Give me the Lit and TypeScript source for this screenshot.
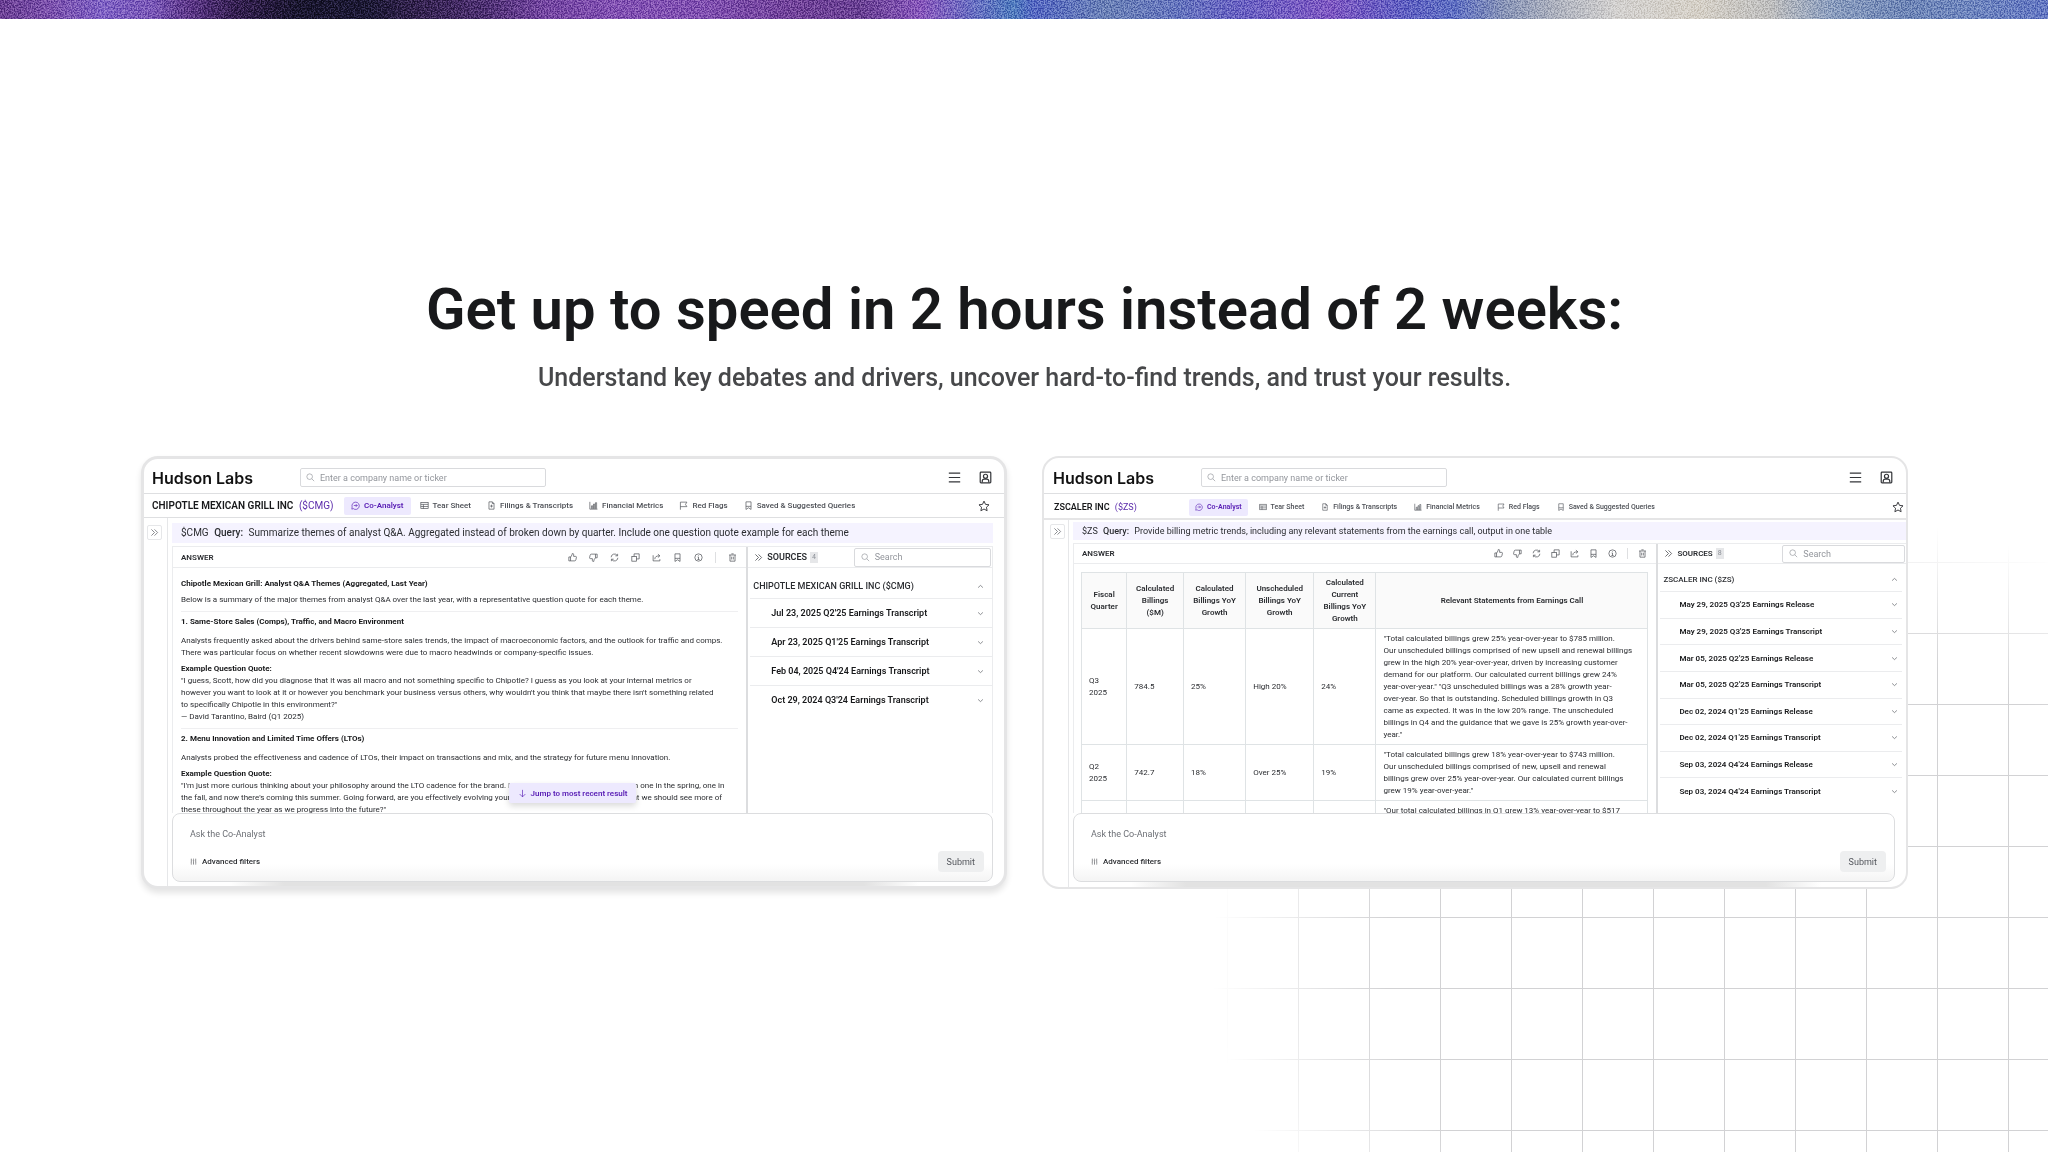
import { LitElement, html, css, svg, nothing } from "lit";
import { customElement, property } from "lit/decorators.js";
import { classMap } from "lit/directives/class-map.js";

/* Line icons on a 32-unit grid. */
const ICONS: Record<string, unknown> = {
  search: svg`<circle cx="13" cy="13" r="10"/><path d="M20.5 20.5L29 29"/>`,
  menu: svg`<path d="M2 5h28M2 16h28M2 27h28"/>`,
  user: svg`<rect x="3" y="3" width="26" height="26" rx="2"/><circle cx="16" cy="13" r="5"/><path d="M8 28v-3a5 5 0 0 1 5-5h6a5 5 0 0 1 5 5v3"/>`,
  star: svg`<path d="M16 3l4 8.600 9.400 1.200-6.900 6.500 1.800 9.300L16 24l-8.300 4.600 1.800-9.300L2.600 12.800 12 11.600z"/>`,
  chevrons: svg`<path d="M5 5l11 11L5 27M16 5l11 11-11 11"/>`,
  analyst: svg`<path d="M8 27A13 13 0 1 0 4 21l-1 8z"/><path d="M10 16h12M17 11l5 5-5 5"/>`,
  sheet: svg`<rect x="3" y="5" width="26" height="22"/><path d="M3 12h26M3 19.500h26M12 12v15"/>`,
  doc: svg`<path d="M19 3H7v26h18V9zM19 3v6h6"/><path d="M11 18h10M16 13v10"/>`,
  chart: svg`<path d="M3 3v26h27M9 28V17h4v11M16 28V11h4v17M23 28V6h4v22"/>`,
  flag: svg`<path d="M5 31V4h23l-5 8 5 8H5"/>`,
  saved: svg`<path d="M7 30V3h18v27l-9-6z"/><path d="M7 19h18"/>`,
  up: svg`<path d="M3 14h6v14H3zM9 15l5-8 1-5h2a3 3 0 0 1 3 3v7h7a3 3 0 0 1 3 3l-2 9a5 5 0 0 1-5 4H9"/>`,
  down: svg`<path d="M23 4h6v13h-6zM23 17l-5 7-1 6h-2a3 3 0 0 1-3-3v-7H5a3 3 0 0 1-3-3l2-9a5 5 0 0 1 5-4h14"/>`,
  cycle: svg`<path d="M4 15A12 12 0 0 1 26 9M28 17A12 12 0 0 1 6 23M27 3v7h-8M5 29v-7h8"/>`,
  copy: svg`<rect x="3" y="12" width="17" height="17"/><path d="M11 12V3h18v18h-9"/>`,
  share: svg`<path d="M4 8v20h24v-6M10 22c0-8 5-12 17-12M21 4l7 6-7 6"/>`,
  info: svg`<circle cx="16" cy="16" r="13"/><path d="M13 14h3v9M12 23h8M16 8v2"/>`,
  trash: svg`<path d="M4 7h24M12 3h8M7 7v22h18V7M13 13v10M19 13v10"/>`,
  sliders: svg`<path d="M6 3v16M6 25v5M16 3v5M16 14v16M26 3v16M26 25v5M3 22h6M13 11h6M23 22h6"/>`,
  arrow: svg`<path d="M16 3v25M6 18l10 10 10-10"/>`,
  open: svg`<path d="M5 21l11-10 11 10"/>`,
  shut: svg`<path d="M5 11l11 10 11-10"/>`,
};

const icon = (name: string, cls = "") => html`<svg
  class="icon ${cls}" viewBox="0 0 32 32" aria-hidden="true">${ICONS[name]}</svg>`;

const TABS: [string, string][] = [
  ["analyst", "Co-Analyst"],
  ["sheet", "Tear Sheet"],
  ["doc", "Filings & Transcripts"],
  ["chart", "Financial Metrics"],
  ["flag", "Red Flags"],
  ["saved", "Saved & Suggested Queries"],
];

const TOOLS: [string, string][] = [
  ["up", "Good answer"],
  ["down", "Poor answer"],
  ["cycle", "Regenerate"],
  ["copy", "Copy"],
  ["share", "Share"],
  ["saved", "Save"],
  ["info", "Details"],
];

interface Theme {
  title: string;
  summary: string[];
  quote: string[];
}

interface TableRow {
  cells: string[];
  statement: string[];
}

interface Company {
  id: string;
  name: string;
  ticker: string;
  query: string;
  compact: boolean;
  sources: string[];
  answerTitle?: string;
  answerIntro?: string;
  themes?: Theme[];
  columns?: string[];
  rows?: TableRow[];
}

const CHIPOTLE: Company = {
  id: "cmg",
  name: "CHIPOTLE MEXICAN GRILL INC",
  ticker: "$CMG",
  query:
    "Summarize themes of analyst Q&A. Aggregated instead of broken down by quarter. Include one question quote example for each theme",
  compact: false,
  sources: [
    "Jul 23, 2025 Q2'25 Earnings Transcript",
    "Apr 23, 2025 Q1'25 Earnings Transcript",
    "Feb 04, 2025 Q4'24 Earnings Transcript",
    "Oct 29, 2024 Q3'24 Earnings Transcript",
  ],
  answerTitle: "Chipotle Mexican Grill: Analyst Q&A Themes (Aggregated, Last Year)",
  answerIntro:
    "Below is a summary of the major themes from analyst Q&A over the last year, with a representative question quote for each theme.",
  themes: [
    {
      title: "1. Same-Store Sales (Comps), Traffic, and Macro Environment",
      summary: [
        "Analysts frequently asked about the drivers behind same-store sales trends, the impact of macroeconomic factors, and the outlook for traffic and comps.",
        "There was particular focus on whether recent slowdowns were due to macro headwinds or company-specific issues.",
      ],
      quote: [
        "\"I guess, Scott, how did you diagnose that it was all macro and not something specific to Chipotle? I guess as you look at your internal metrics or",
        "however you want to look at it or however you benchmark your business versus others, why wouldn't you think that maybe there isn't something related",
        "to specifically Chipotle in this environment?\"",
        "— David Tarantino, Baird (Q1 2025)",
      ],
    },
    {
      title: "2. Menu Innovation and Limited Time Offers (LTOs)",
      summary: [
        "Analysts probed the effectiveness and cadence of LTOs, their impact on transactions and mix, and the strategy for future menu innovation.",
      ],
      quote: [
        "\"I'm just more curious thinking about your philosophy around the LTO cadence for the brand. I mean, I think there has always been one in the spring, one in",
        "the fall, and now there's coming this summer. Going forward, are you effectively evolving your marketing calendar cadence so that we should see more of",
        "these throughout the year as we progress into the future?\"",
      ],
    },
  ],
};

const ZSCALER: Company = {
  id: "zs",
  name: "ZSCALER INC",
  ticker: "$ZS",
  query:
    "Provide billing metric trends, including any relevant statements from the earnings call, output in one table",
  compact: true,
  sources: [
    "May 29, 2025 Q3'25 Earnings Release",
    "May 29, 2025 Q3'25 Earnings Transcript",
    "Mar 05, 2025 Q2'25 Earnings Release",
    "Mar 05, 2025 Q2'25 Earnings Transcript",
    "Dec 02, 2024 Q1'25 Earnings Release",
    "Dec 02, 2024 Q1'25 Earnings Transcript",
    "Sep 03, 2024 Q4'24 Earnings Release",
    "Sep 03, 2024 Q4'24 Earnings Transcript",
  ],
  columns: [
    "Fiscal\nQuarter",
    "Calculated\nBillings\n($M)",
    "Calculated\nBillings YoY\nGrowth",
    "Unscheduled\nBillings YoY\nGrowth",
    "Calculated\nCurrent\nBillings YoY\nGrowth",
    "Relevant Statements from Earnings Call",
  ],
  rows: [
    {
      cells: ["Q3\n2025", "784.5", "25%", "High 20%", "24%"],
      statement: [
        "\"Total calculated billings grew 25% year-over-year to $785 million.",
        "Our unscheduled billings comprised of new upsell and renewal billings",
        "grew in the high 20% year-over-year, driven by increasing customer",
        "demand for our platform. Our calculated current billings grew 24%",
        "year-over-year.\" \"Q3 unscheduled billings was a 28% growth year-",
        "over-year. So that is outstanding. Scheduled billings growth in Q3",
        "came as expected. It was in the low 20% range. The unscheduled",
        "billings in Q4 and the guidance that we gave is 25% growth year-over-",
        "year.\"",
      ],
    },
    {
      cells: ["Q2\n2025", "742.7", "18%", "Over 25%", "19%"],
      statement: [
        "\"Total calculated billings grew 18% year-over-year to $743 million.",
        "Our unscheduled billings comprised of new, upsell and renewal",
        "billings grew over 25% year-over-year. Our calculated current billings",
        "grew 19% year-over-year.\"",
      ],
    },
    {
      cells: ["", "", "", "", ""],
      statement: ["\"Our total calculated billings in Q1 grew 13% year-over-year to $517"],
    },
  ],
};

@customElement("analyst-card")
export class AnalystCard extends LitElement {
  @property({ attribute: false }) company!: Company;

  static styles = css`
    :host {
      display: block;
      min-width: 0;
    }
    * {
      box-sizing: border-box;
    }
    button,
    input {
      font: inherit;
      color: inherit;
      border: 0;
      margin: 0;
      padding: 0;
      background: none;
    }
    button {
      cursor: pointer;
    }
    a {
      color: inherit;
      text-decoration: none;
    }
    h2,
    h3,
    h4,
    p,
    ul {
      margin: 0;
      padding: 0;
      font: inherit;
      list-style: none;
    }
    .icon {
      width: 9px;
      height: 9px;
      flex: none;
      display: block;
      fill: none;
      stroke: currentColor;
      stroke-width: 2.400;
    }
    .card {
      --text: 9px;
      --nav: 8px;
      --query: 10px;
      --bar: 21px;
      --step: 12px;
      display: flex;
      flex-direction: column;
      aspect-ratio: 2 / 1;
      overflow: hidden;
      border: 3px solid #e5e5e6;
      border-radius: 17px;
      background: #fff;
      color: #2b2d31;
      box-shadow: 0 4px 6px #0000001c;
    }
    .compact {
      --text: 8px;
      --nav: 7px;
      --query: 9px;
      --bar: 20px;
      --step: 10px;
      border-width: 2px;
      box-shadow: none;
    }

    .top {
      flex: none;
      display: flex;
      align-items: center;
      height: 35px;
      padding: 3px 12px 0 8px;
      border-bottom: 1px solid #dedfe1;
    }
    .compact .top {
      padding: 4px 13px 0 9px;
      height: 36px;
    }
    .logo {
      width: 148px;
      font: 600 16px/20px Inter, sans-serif;
      color: #111;
    }
    .field {
      display: flex;
      align-items: center;
      gap: 5px;
      height: 19px;
      padding: 0 5px;
      border: 1px solid #d9dadd;
      border-radius: 2px;
      color: #93969c;
      font-size: 9px;
    }
    .field input {
      flex: 1;
      min-width: 0;
      outline: none;
    }
    .field input::placeholder {
      color: #93969c;
      opacity: 1;
    }
    .lookup {
      width: 246px;
    }
    .actions {
      display: flex;
      gap: 18px;
      margin-left: auto;
      color: #34363a;
    }
    .actions .icon {
      width: 13px;
      height: 13px;
      stroke-width: 3;
    }

    .nav {
      flex: none;
      display: flex;
      align-items: center;
      height: 24px;
      padding: 0 14px 0 8px;
      border-bottom: 1px solid #dedfe1;
    }
    .compact .nav {
      height: 26px;
      padding: 2px 2px 0 10px;
      border-bottom: 2px solid #e5e5e6;
    }
    .name {
      width: 192px;
      white-space: nowrap;
      font-size: 10px;
      font-weight: 600;
      color: #17181a;
    }
    .compact .name {
      width: 135px;
      font-size: 9px;
    }
    .ticker {
      margin-left: 3px;
      font-weight: 400;
      color: #5b2bab;
    }
    .tabs {
      display: flex;
      gap: 2px;
    }
    .compact .tabs {
      gap: 5px;
    }
    .tab {
      display: flex;
      align-items: center;
      gap: 4px;
      height: 18px;
      padding: 0 7px;
      border-radius: 2px;
      white-space: nowrap;
      font-size: var(--nav);
      font-weight: 500;
      color: #4c4f55;
    }
    .tab.current {
      background: #ede9fe;
      color: #5b21b6;
      font-weight: 600;
    }
    .compact .tab {
      height: 17px;
      padding: 0 6px;
    }
    .compact .tab .icon {
      width: 8px;
      height: 8px;
    }
    .star {
      margin-left: auto;
    }
    .star .icon {
      width: 12px;
      height: 12px;
    }

    .body {
      flex: 1;
      min-height: 0;
      display: flex;
    }
    .rail {
      flex: none;
      width: 24px;
      padding: 7px 5px 0 3px;
      border-right: 1px solid #e6e7e9;
    }
    .compact .rail {
      width: 25px;
      padding: 4px 4px 0 6px;
    }
    .expand {
      display: grid;
      place-items: center;
      width: 15px;
      height: 15px;
      border: 1px solid #e6e7e9;
      border-radius: 2px;
      color: #54575d;
    }
    .main {
      flex: 1;
      min-width: 0;
      display: flex;
      flex-direction: column;
      padding: 5px 11px 4px 4px;
    }
    .compact .main {
      padding: 2px 0 5px 4px;
    }
    .query {
      flex: none;
      height: 20px;
      padding-left: 9px;
      line-height: 20px;
      background: #f5f3ff;
      white-space: nowrap;
      font-size: var(--query);
      overflow: hidden;
    }
    .compact .query {
      height: 18px;
      line-height: 18px;
    }
    .query b {
      margin: 0 3px;
      font-weight: 500;
    }

    .panels {
      flex: 1;
      min-height: 0;
      overflow: hidden;
      display: grid;
      grid-template-columns: 7fr 3fr;
      margin-top: 3px;
      border: 1px solid #ebecee;
      border-bottom: 0;
    }
    .compact .panels {
      border-right: 0;
    }
    .panel {
      min-width: 0;
      min-height: 0;
      overflow: hidden;
    }
    .bar {
      display: flex;
      align-items: center;
      height: var(--bar);
      border-bottom: 1px solid #ebecee;
      font-size: 8px;
      font-weight: 600;
    }
    .answer .bar {
      padding: 0 9px 0 8px;
    }
    .tools {
      display: flex;
      align-items: center;
      gap: var(--step);
      margin-left: auto;
      color: #45484d;
    }
    .tools .rule {
      width: 1px;
      height: 11px;
      background: #dedfe1;
    }

    .text {
      padding: 10px 8px;
      font-size: 8px;
      line-height: 12px;
      white-space: pre;
    }
    .text h3,
    .text h4 {
      font-weight: 700;
      color: #17181a;
    }
    .text p + h4,
    .text h3 + p {
      margin-top: 4px;
    }
    .text .theme {
      margin-top: 5px;
      padding-top: 4px;
      border-top: 1px solid #efeff1;
    }
    .text .theme h3 + p {
      margin-top: 7px;
    }

    .scroll {
      padding: 8px 8px 0 7px;
    }
    table {
      width: 100%;
      table-layout: fixed;
      border-collapse: collapse;
      font-size: 8px;
      line-height: 12px;
      white-space: pre;
    }
    th,
    td {
      padding: 4px 7px 3px;
      border: 1px solid #dfe3e5;
      text-align: left;
      font-weight: 400;
    }
    th {
      padding: 4px 0 3px;
      background: #fafafa;
      text-align: center;
      font-weight: 600;
    }
    col:nth-child(1) {
      width: 8%;
    }
    col:nth-child(2) {
      width: 10%;
    }
    col:nth-child(3) {
      width: 11%;
    }
    col:nth-child(4) {
      width: 12%;
    }
    col:nth-child(5) {
      width: 11%;
    }

    .sources {
      border-left: 2px solid #dcdddf;
      font-size: var(--text);
    }
    .sources .bar {
      padding: 0 1px 0 6px;
      font-size: 9px;
    }
    .compact .sources .bar {
      font-size: 8px;
    }
    .sources h3 {
      margin-left: 4px;
    }
    .count {
      margin-left: 3px;
      padding: 0 2px;
      background: #e6e7e9;
      color: #8c9097;
      font-size: 7px;
      font-weight: 400;
      line-height: 11px;
    }
    .sources .field {
      width: 58%;
      margin-left: auto;
      font-weight: 400;
      padding: 0 6px;
    }
    .compact .sources .field {
      width: 51%;
      height: 18px;
    }
    .group,
    .source {
      display: flex;
      align-items: center;
      justify-content: space-between;
      width: 100%;
      padding: 0 8px 0 5px;
      text-align: left;
      white-space: nowrap;
    }
    .group .icon,
    .source .icon {
      width: 7px;
      height: 7px;
      stroke-width: 3;
      color: #54575d;
    }
    .group {
      height: 30px;
      padding-top: 6px;
      font-weight: 500;
    }
    .compact .group {
      height: 27px;
      padding-top: 4px;
    }
    .list {
      display: grid;
      grid-auto-rows: 29px;
      margin: 0 0 0 2px;
    }
    .compact .list {
      height: 213px;
      grid-auto-rows: 1fr;
      margin-right: 4px;
    }
    .list li {
      display: flex;
      border-top: 1px solid #ebecee;
    }
    .source {
      padding: 0 8px 0 21px;
      font-weight: 600;
      color: #17181a;
    }
    .compact .source {
      padding: 0 4px 0 19px;
    }

    .dock {
      flex: none;
      position: relative;
    }
    .compact .dock {
      margin-right: 11px;
    }
    .jump {
      position: absolute;
      left: 41%;
      bottom: calc(100% + 10px);
      display: flex;
      align-items: center;
      gap: 4px;
      height: 20px;
      padding: 0 8px 0 9px;
      border-radius: 2px;
      background: #ede9fe;
      box-shadow: 0 3px 6px #00000026;
      color: #5b21b6;
      font-size: 8px;
      font-weight: 600;
      white-space: nowrap;
    }
    .composer {
      display: flex;
      flex-direction: column;
      justify-content: space-between;
      height: 69px;
      padding: 12px 8px 9px 17px;
      border: 1px solid #dcdddf;
      border-radius: 8px;
      background: #fff linear-gradient(transparent 75%, #f4f4f4);
    }
    .composer input {
      width: 100%;
      height: 16px;
      outline: none;
      font-size: 9px;
    }
    .composer input::placeholder {
      color: #6d7076;
      opacity: 1;
    }
    .row {
      display: flex;
      align-items: center;
      justify-content: space-between;
    }
    .filters {
      display: flex;
      align-items: center;
      gap: 5px;
      font-size: 8px;
      font-weight: 500;
    }
    .filters .icon {
      width: 7px;
      height: 7px;
    }
    .submit {
      height: 21px;
      padding: 0 9px;
      border-radius: 4px;
      background: #eeeff0;
      color: #54575d;
      font-size: 9px;
    }
    .shade {
      position: absolute;
      right: 9%;
      left: 7%;
      top: 100%;
      height: 5px;
      background: linear-gradient(to right, transparent, #e2e2e2 8%, #e2e2e2 92%, transparent);
    }
  `;

  private renderThemes(c: Company) {
    return html`<div class="text"><h3>${c.answerTitle}</h3><p>${c.answerIntro}</p>${c.themes!.map(
      (t) => html`<section class="theme"><h3>${t.title}</h3><p>${t.summary.join("\n")}</p><h4>Example Question Quote:</h4><p>${t.quote.join("\n")}</p></section>`,
    )}</div>`;
  }

  private renderTable(c: Company) {
    return html`<div class="scroll">
      <table>
        <colgroup>
          ${c.columns!.map(() => html`<col />`)}
        </colgroup>
        <thead>
          <tr>
            ${c.columns!.map((h) => html`<th scope="col">${h}</th>`)}
          </tr>
        </thead>
        <tbody>
          ${c.rows!.map(
            (r) => html`<tr>
              ${r.cells.map((v) => html`<td>${v}</td>`)}
              <td>${r.statement.join("\n")}</td>
            </tr>`,
          )}
        </tbody>
      </table>
    </div>`;
  }

  render() {
    const c = this.company;
    return html`<article class=${classMap({ card: true, compact: c.compact })}>
      <header class="top">
        <a class="logo" href="#">Hudson Labs</a>
        <label class="field lookup">
          ${icon("search")}
          <input type="search" aria-label="Company lookup" placeholder="Enter a company name or ticker" />
        </label>
        <div class="actions">
          <button aria-label="Menu">${icon("menu")}</button>
          <button aria-label="Account">${icon("user")}</button>
        </div>
      </header>
      <nav class="nav">
        <h2 class="name">${c.name} <span class="ticker">(${c.ticker})</span></h2>
        <div class="tabs">
          ${TABS.map(
            ([glyph, label], i) =>
              html`<a class=${classMap({ tab: true, current: i === 0 })} href="#">${icon(glyph)}${label}</a>`,
          )}
        </div>
        <button class="star" aria-label="Favourite">${icon("star")}</button>
      </nav>
      <div class="body">
        <aside class="rail"><button class="expand" aria-label="Expand">${icon("chevrons")}</button></aside>
        <main class="main">
          <p class="query">${c.ticker} <b>Query:</b> ${c.query}</p>
          <div class="panels">
            <section class="panel answer">
              <div class="bar">
                <h3>ANSWER</h3>
                <div class="tools">
                  ${TOOLS.map(([glyph, label]) => html`<button aria-label=${label}>${icon(glyph)}</button>`)}
                  <span class="rule"></span>
                  <button aria-label="Delete">${icon("trash")}</button>
                </div>
              </div>
              ${c.themes ? this.renderThemes(c) : this.renderTable(c)}
            </section>
            <section class="panel sources">
              <div class="bar">
                ${icon("chevrons")}
                <h3>SOURCES</h3>
                <span class="count">${c.sources.length}</span>
                <label class="field">
                  ${icon("search")}
                  <input type="search" aria-label="Search sources" placeholder="Search" />
                </label>
              </div>
              <button class="group">${c.name} (${c.ticker}) ${icon("open")}</button>
              <ul class="list">
                ${c.sources.map((s) => html`<li><button class="source">${s} ${icon("shut")}</button></li>`)}
              </ul>
            </section>
          </div>
          <div class="dock">
            ${c.themes ? html`<button class="jump">${icon("arrow")}Jump to most recent result</button>` : nothing}
            <form class="composer" @submit=${(e: Event) => e.preventDefault()}>
              <input type="text" aria-label="Question" placeholder="Ask the Co-Analyst" />
              <div class="row">
                <button type="button" class="filters">${icon("sliders")}Advanced filters</button>
                <button type="submit" class="submit">Submit</button>
              </div>
            </form>
            <div class="shade"></div>
          </div>
        </main>
      </div>
    </article>`;
  }
}

@customElement("app-root")
export class AppRoot extends LitElement {
  static styles = css`
    :host {
      display: block;
      position: relative;
      min-height: 100vh;
      overflow: hidden;
      background: #fff;
      font-family: Roboto, "Liberation Sans", sans-serif;
      color: #18191b;
    }
    .ribbon {
      display: block;
      height: 19px;
      background: linear-gradient(
        to right,
        #6a3d94,
        #7c50ae 2.500%,
        #8062c6 5%,
        #7a56b8 7.500%,
        #5b3488 9.300%,
        #321d50 11.500%,
        #17142c 14.500%,
        #1a1733 18%,
        #32204f 20.500%,
        #4a2c70 23.500%,
        #7444a2 26.500%,
        #8350b4 30%,
        #8350b4 34%,
        #71409a 39%,
        #6a3f95 42%,
        #8a58be 45%,
        #6a70c4 47.500%,
        #4f7cbf 49.500%,
        #5568c4 50.500%,
        #6b82b8 54%,
        #6676c0 57.500%,
        #6a62c4 60.500%,
        #8058c4 65%,
        #6160c4 68.500%,
        #5f70c4 71%,
        #8a96b8 73.500%,
        #b0b4c0 76%,
        #d4d2d0 79%,
        #d6d1c8 83%,
        #c0c0c0 86.500%,
        #8c9fc0 89.500%,
        #6f87b8 93%,
        #7088c0 96%,
        #6478c4
      );
    }
    .ribbon svg {
      display: block;
      width: 100%;
      height: 100%;
      mix-blend-mode: soft-light;
      opacity: 0.6;
    }
    .mesh {
      position: absolute;
      right: 0;
      bottom: 0;
      width: 852px;
      height: 640px;
      background:
        linear-gradient(to right, #d2d2d4 1px, transparent 1px) 31px 0 / 71px 71px,
        linear-gradient(#d2d2d4 1px, transparent 1px) 0 50px / 71px 71px;
      -webkit-mask-image: radial-gradient(580px 450px at 595px 450px, #000 70%, transparent);
      mask-image: radial-gradient(580px 450px at 595px 450px, #000 70%, transparent);
    }
    .page {
      position: relative;
      padding: 255px 140px 0 141px;
    }
    h1,
    p {
      margin: 0;
      text-align: center;
    }
    h1 {
      font-size: 58px;
      line-height: 70px;
      font-weight: 600;
    }
    p {
      margin-top: 18px;
      font-size: 25px;
      line-height: 32px;
      font-weight: 500;
      color: #47484a;
    }
    .cards {
      display: grid;
      grid-template-columns: 1fr 1fr;
      gap: 35px;
      margin-top: 62px;
    }
  `;

  render() {
    return html`
      <div class="ribbon">
        <svg aria-hidden="true">
          <filter id="grain" x="0" y="0" width="100%" height="100%" color-interpolation-filters="sRGB">
            <feTurbulence type="fractalNoise" baseFrequency="0.7" numOctaves="2" seed="4" />
            <feColorMatrix type="matrix" values="3 0 0 0 -1  3 0 0 0 -1  3 0 0 0 -1  0 0 0 0 1" />
          </filter>
          <rect width="100%" height="100%" filter="url(#grain)" />
        </svg>
      </div>
      <div class="mesh"></div>
      <div class="page">
        <h1>Get up to speed in 2 hours instead of 2 weeks:</h1>
        <p>Understand key debates and drivers, uncover hard-to-find trends, and trust your results.</p>
        <div class="cards">
          <analyst-card .company=${CHIPOTLE}></analyst-card>
          <analyst-card .company=${ZSCALER}></analyst-card>
        </div>
      </div>
    `;
  }
}
